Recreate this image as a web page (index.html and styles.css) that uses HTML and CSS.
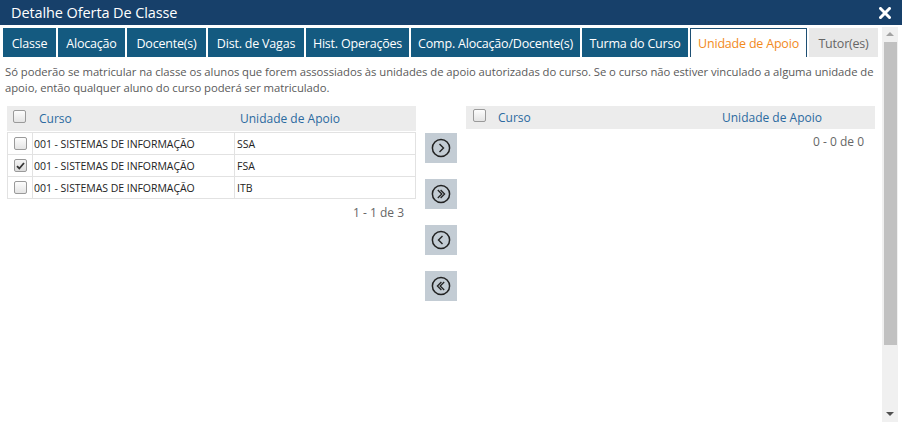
FILE: index.html
```html
<!DOCTYPE html>
<html lang="pt">
<head>
<meta charset="utf-8">
<link rel="stylesheet" href="styles.css">
</head>
<body>
<div class="modal">
  <div class="titlebar">
    <span class="title">Detalhe Oferta De Classe</span>
    <svg class="close" width="12" height="12" viewBox="0 0 12 12"><path d="M1.5 1.5 L10.5 10.5 M10.5 1.5 L1.5 10.5" stroke="#fff" stroke-width="3" stroke-linecap="square"/></svg>
  </div>
  <div class="body">
    <div class="content">
      <div class="tabs">
        <div class="tab" style="width:53px">Classe</div>
        <div class="tab" style="width:67px">Alocação</div>
        <div class="tab" style="width:79px">Docente(s)</div>
        <div class="tab" style="width:96px">Dist. de Vagas</div>
        <div class="tab" style="width:103px">Hist. Operações</div>
        <div class="tab" style="width:169px">Comp. Alocação/Docente(s)</div>
        <div class="tab" style="width:106px">Turma do Curso</div>
        <div class="tab active" style="width:117px">Unidade de Apoio</div>
        <div class="tab inactive" style="width:69px">Tutor(es)</div>
      </div>
      <p class="info">Só poderão se matricular na classe os alunos que forem assossiados às unidades de apoio autorizadas do curso. Se o curso não estiver vinculado a alguma unidade de apoio, então qualquer aluno do curso poderá ser matriculado.</p>
      <div class="lists">
        <div class="panel left">
          <div class="thead">
            <span class="cb-cell"><span class="cb"></span></span>
            <span class="c-curso">Curso</span>
            <span class="c-uni">Unidade de Apoio</span>
          </div>
          <div class="rows">
            <div class="row"><span class="cb-cell"><span class="cb"></span></span><span class="c-curso">001 - SISTEMAS DE INFORMAÇÃO</span><span class="c-uni">SSA</span></div>
            <div class="row"><span class="cb-cell"><span class="cb checked"><svg width="9" height="8" viewBox="0 0 9 8"><path d="M1 4.2 L3.3 6.5 L8 1" fill="none" stroke="#333" stroke-width="1.8"/></svg></span></span><span class="c-curso">001 - SISTEMAS DE INFORMAÇÃO</span><span class="c-uni">FSA</span></div>
            <div class="row"><span class="cb-cell"><span class="cb"></span></span><span class="c-curso">001 - SISTEMAS DE INFORMAÇÃO</span><span class="c-uni">ITB</span></div>
          </div>
          <div class="pager">1 - 1 de 3</div>
        </div>
        <div class="buttons">
          <div class="btn"><svg width="20" height="20" viewBox="0 0 20 20"><circle cx="10" cy="10" r="8.6" fill="none" stroke="#222" stroke-width="1.5"/><path d="M8.5 6 L12.5 10 L8.5 14" fill="none" stroke="#222" stroke-width="1.4"/></svg></div>
          <div class="btn"><svg width="20" height="20" viewBox="0 0 20 20"><circle cx="10" cy="10" r="8.6" fill="none" stroke="#222" stroke-width="1.5"/><path d="M6.8 6 L10.8 10 L6.8 14 M9.6 6 L13.6 10 L9.6 14" fill="none" stroke="#222" stroke-width="1.3"/></svg></div>
          <div class="btn"><svg width="20" height="20" viewBox="0 0 20 20"><circle cx="10" cy="10" r="8.6" fill="none" stroke="#222" stroke-width="1.5"/><path d="M11.5 6 L7.5 10 L11.5 14" fill="none" stroke="#222" stroke-width="1.4"/></svg></div>
          <div class="btn"><svg width="20" height="20" viewBox="0 0 20 20"><circle cx="10" cy="10" r="8.6" fill="none" stroke="#222" stroke-width="1.5"/><path d="M13.2 6 L9.2 10 L13.2 14 M10.4 6 L6.4 10 L10.4 14" fill="none" stroke="#222" stroke-width="1.3"/></svg></div>
        </div>
        <div class="panel right">
          <div class="thead">
            <span class="cb-cell"><span class="cb"></span></span>
            <span class="c-curso2">Curso</span>
            <span class="c-uni2">Unidade de Apoio</span>
          </div>
          <div class="pager">0 - 0 de 0</div>
        </div>
      </div>
    </div>
    <div class="scrollbar">
      <div class="arrow up"></div>
      <div class="track"><div class="thumb"></div></div>
      <div class="arrow down"></div>
    </div>
  </div>
</div>
</body>
</html>
```

FILE: styles.css
```css
html, body {
  margin: 0;
  padding: 0;
  background: #fff;
  width: 902px;
  height: 422px;
  overflow: hidden;
  font-family: "Open Sans", "Noto Sans", sans-serif;
}
.modal {
  width: 902px;
  height: 422px;
  display: flex;
  flex-direction: column;
}
.titlebar {
  height: 25px;
  background: #17406a;
  display: flex;
  align-items: center;
  justify-content: space-between;
  padding: 0 11px 0 11px;
  box-sizing: border-box;
  flex: none;
}
.title {
  color: #fff;
  font-size: 14.5px;
  letter-spacing: -0.1px;
}
.close { display: block; margin-top: 0; }
.body {
  flex: 1;
  display: flex;
  padding-top: 2px;
  min-height: 0;
}
.content {
  width: 882px;
  flex: none;
}
.tabs {
  display: flex;
  gap: 2px;
  padding: 1px 0 0 3px;
  height: 29px;
}
.tab {
  box-sizing: border-box;
  background: #145a80;
  color: #fff;
  font-size: 12.5px;
  display: flex;
  align-items: center;
  justify-content: center;
  height: 29px;
  white-space: nowrap;
  letter-spacing: -0.2px;
  padding-top: 2px;
}
.tab.active {
  background: #fff;
  color: #f28a1c;
  border: 1px solid #1d4f73;
  border-bottom: none;
  padding-top: 1px;
}
.tab.inactive {
  background: #e8e8e8;
  color: #666;
}
.info {
  margin: 7px 0 0 5px;
  font-size: 11.3px;
  line-height: 15.5px;
  color: #5a5a5a;
  width: 876px;
  letter-spacing: -0.05px;
}
.lists {
  display: flex;
  margin-top: 11px;
  padding-left: 7px;
  align-items: flex-start;
}
.panel.left { width: 409px; }
.panel.right { width: 409px; margin-left: 9px; }
.thead {
  height: 25px;
  background: #ececec;
  display: flex;
  align-items: center;
  color: #2b6aa0;
  font-size: 12px;
}
.panel.right .thead { height: 23px; }
.cb-cell {
  width: 25px;
  flex: none;
  display: flex;
  align-items: center;
  justify-content: center;
  align-self: stretch;
}
.thead .cb-cell { align-items: flex-start; padding-top: 4px; box-sizing: border-box; }
.panel.right .thead .cb-cell { padding-top: 3px; padding-left: 1px; }
.cb {
  width: 11px;
  height: 11px;
  border: 1px solid #9a9a9a;
  border-radius: 2px;
  background: linear-gradient(#fdfdfd, #e4e4e4);
  display: flex;
  align-items: center;
  justify-content: center;
}
.cb.checked { background: linear-gradient(#f4f4f4, #dcdcdc); }
.cb svg { display: block; }
.c-curso { width: 202px; flex: none; padding-left: 6px; box-sizing: border-box; }
.c-uni { flex: 1; padding-left: 7px; }
.thead .c-curso { padding-left: 7px; }
.thead .c-uni { padding-left: 6px; }
.c-curso2 { width: 231px; flex: none; padding-left: 7px; box-sizing: border-box; }
.c-uni2 { flex: 1; }
.rows {
  border: 1px solid #e2e2e2;
  border-bottom: none;
  margin-top: 1px;
}
.row {
  display: flex;
  height: 22px;
  border-bottom: 1px solid #e2e2e2;
  font-size: 10.5px;
  color: #222;
  align-items: stretch;
  box-sizing: border-box;
}
.row .cb-cell { width: 24px; border-right: 1px solid #e2e2e2; }
.row .c-curso { width: 202px; padding-left: 1px; border-right: 1px solid #e2e2e2; display: flex; align-items: center; letter-spacing: -0.05px; }
.row .c-uni { display: flex; align-items: center; padding-left: 2px; }
.pager {
  text-align: right;
  font-size: 12px;
  color: #666;
  padding-right: 12px;
  margin-top: 5px;
}
.panel.right .pager { padding-right: 11px; margin-top: 4px; }
.buttons {
  width: 32px;
  margin-left: 9px;
  margin-top: 27px;
  display: flex;
  flex-direction: column;
  gap: 16px;
  flex: none;
}
.btn {
  width: 32px;
  height: 30px;
  background: #c3ccd4;
  display: flex;
  align-items: center;
  justify-content: center;
}
.btn svg { display: block; }
.scrollbar {
  width: 16px;
  background: #f0f0f0;
  display: flex;
  flex-direction: column;
}
.arrow { height: 15px; flex: none; position: relative; }
.arrow.up::after, .arrow.down::after {
  content: "";
  position: absolute;
  left: 4px;
  width: 0;
  height: 0;
  border-left: 4px solid transparent;
  border-right: 4px solid transparent;
}
.arrow.up::after { top: 5px; border-bottom: 4px solid #a3a3a3; }
.arrow.down::after { top: 5px; border-top: 4px solid #505050; }
.track { flex: 1; padding: 0 1px 0 2px; }
.thumb { height: 303px; background: #c1c1c1; }
```
